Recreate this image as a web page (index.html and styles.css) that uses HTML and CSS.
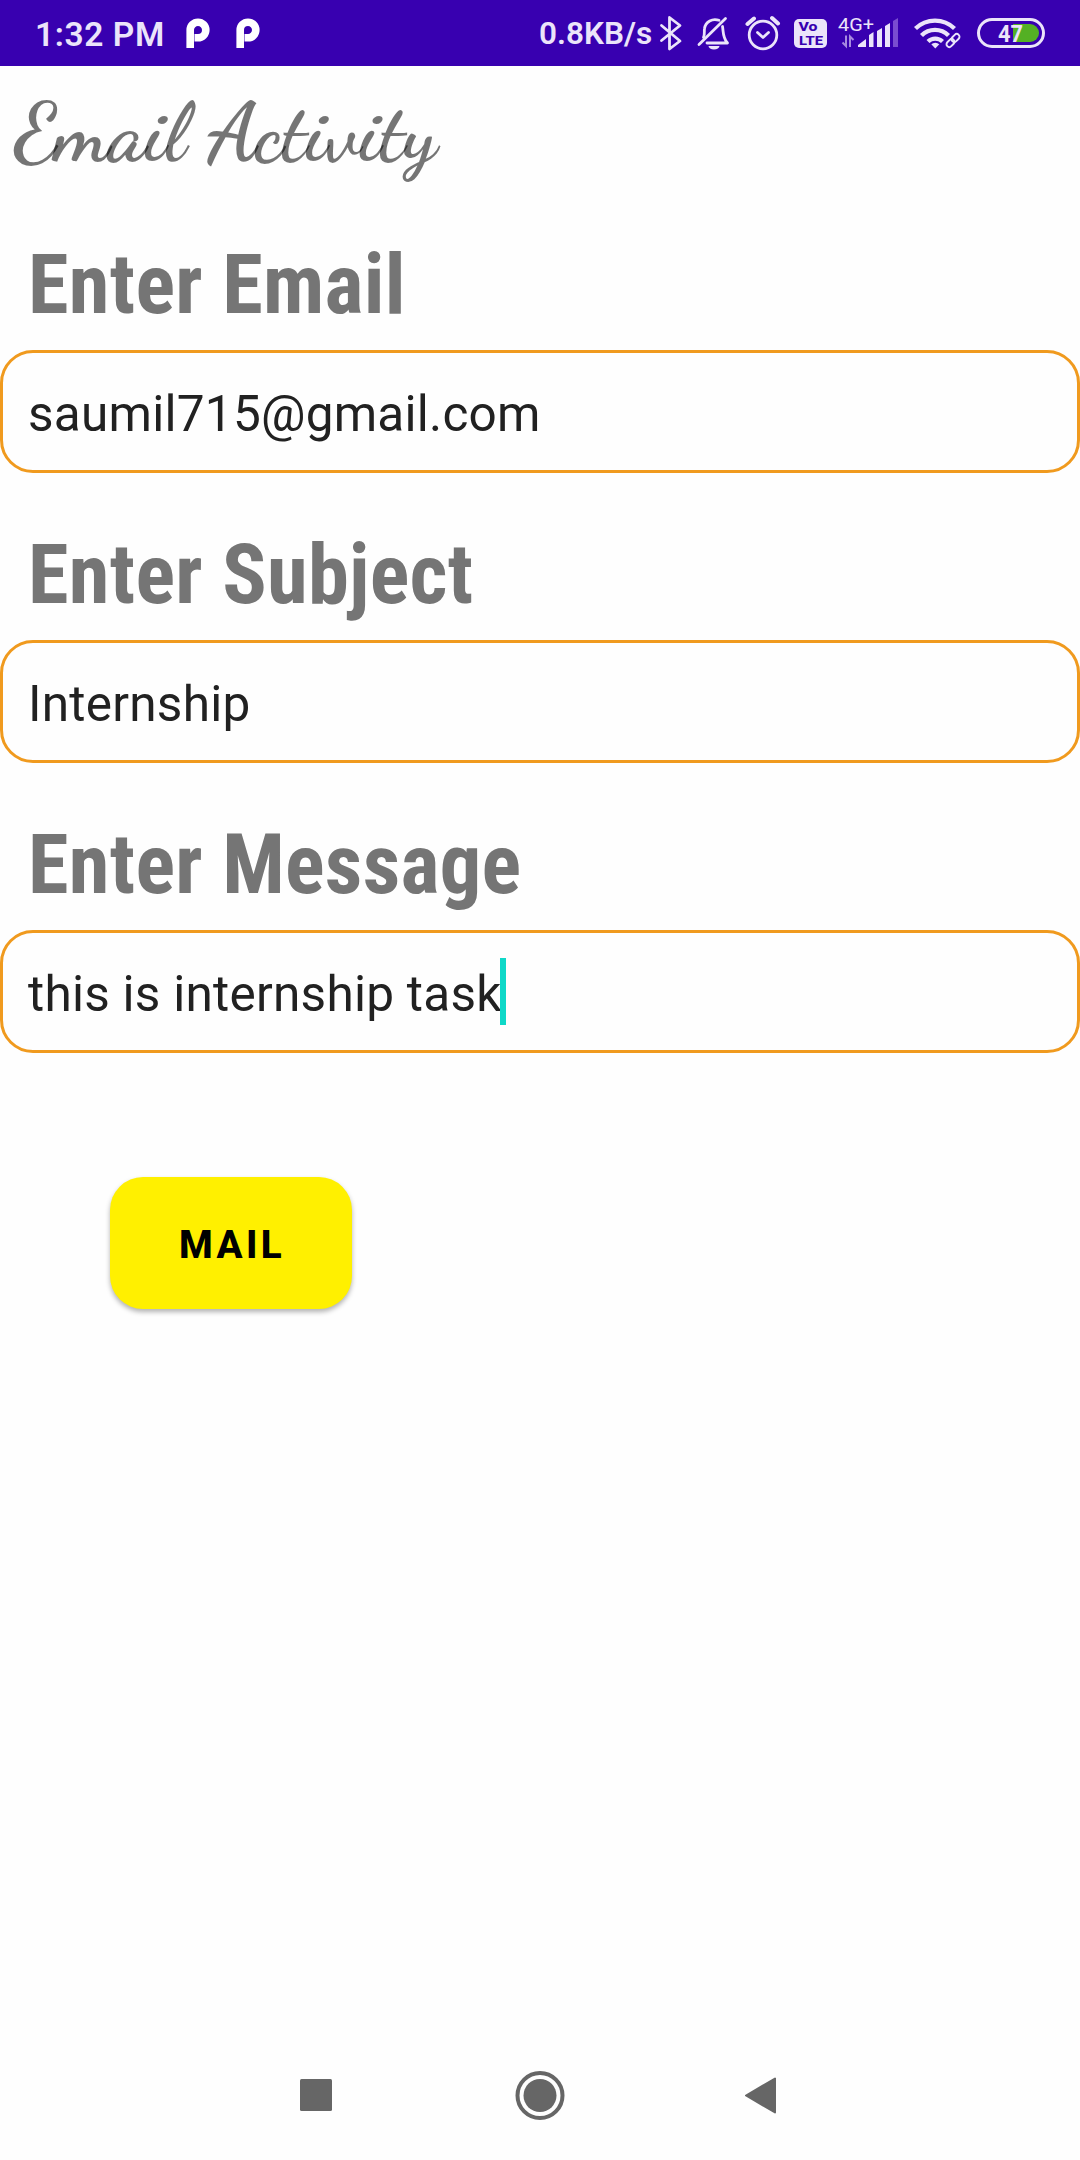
FILE: index.html
```html
<!DOCTYPE html>
<html lang="en">
<head>
<meta charset="utf-8">
<title>Email Activity</title>
<link rel="stylesheet" href="styles.css">
</head>
<body>
<div class="screen">
  <header class="status">
    <span class="clock">1:32 PM</span>
    <svg class="icons-left" width="76" height="66" viewBox="184 0 76 66">
      <g fill="none" stroke="#fff" stroke-width="7.6"><path d="M190.2 48V30a7.8 7.8 0 1 1 7.8 7.8h-3.5"/><path d="M240.2 48V30a7.8 7.8 0 1 1 7.8 7.8h-3.5"/></g>
    </svg>
    <span class="rate">0.8KB/s</span>
    <svg class="icons-right" width="400" height="66" viewBox="655 0 400 66">
      <g fill="none" stroke="#ebe4fa" stroke-width="2.8" stroke-linecap="round" stroke-linejoin="round">
        <path d="M661.5 25.5 680 41l-10.500 8V17.500L680 25.500 661.500 40.500"/>
        <path d="M699 44.500 725.500 18.500"/>
        <path d="M703.500 37.500c1.500-3 .5-6 1-9 1-7 8-10.500 14.500-8.200M722.500 26.500c1 5 0 11 5 16.500H707"/>
        <circle cx="763" cy="35" r="13.800"/>
        <path d="M757.500 32.500l5.500 5 5.500-5"/>
        <path stroke-width="4" d="M747.500 24l6.500-5.500M778 23.500l-6-5.500"/>
      </g>
      <path d="M708.500 46h11a5.500 3.500 0 0 1-11 0z" fill="#ebe4fa"/>
      <rect x="794" y="19" width="33" height="29" rx="5" fill="#ebe4fa"/>
      <text class="volte" x="798.500" y="31" textLength="19" lengthAdjust="spacingAndGlyphs">Vo</text>
      <text class="volte" x="799" y="44.700" textLength="24" lengthAdjust="spacingAndGlyphs">LTE</text>
      <text class="net" x="838" y="30.500" textLength="36" lengthAdjust="spacingAndGlyphs">4G+</text>
      <path d="M846 35.500V46l-3.500-3.500M850 47V36.500l3.500 3.500" fill="none" stroke="#a78ae0" stroke-width="2"/>
      <g fill="#ebe4fa"><path d="M858 47v-2l8-6v8zM869 35l4.500-3v15H869zM877 31l5-3v19h-5zM885 26l5-3v24h-5z"/></g>
      <path d="M893 21l5-3v29h-5z" fill="#7a4dd0"/>
      <g fill="none" stroke="#ebe4fa" stroke-width="4.300">
        <path d="M915.500 28.500a28 28 0 0 1 39 0M921.500 35.500a19 19 0 0 1 27 0M928 41.500a10.500 10.500 0 0 1 14.500 0"/>
      </g>
      <path d="M935.300 48.500l-4-4.300a6 6 0 0 1 8 0z" fill="#ebe4fa"/>
      <g fill="none" stroke="#3800b0" stroke-width="5"><rect x="-4.500" y="-2.800" width="9" height="5.600" rx="2.800" transform="translate(950.500 43) rotate(-45)"/><rect x="-4.500" y="-2.800" width="9" height="5.600" rx="2.800" transform="translate(955.500 38) rotate(-45)"/></g>
      <g fill="none" stroke="#ebe4fa" stroke-width="1.900"><rect x="-4.500" y="-2.800" width="9" height="5.600" rx="2.800" transform="translate(950.500 43) rotate(-45)"/><rect x="-4.500" y="-2.800" width="9" height="5.600" rx="2.800" transform="translate(955.500 38) rotate(-45)"/></g>
      <rect x="978.500" y="19.500" width="65" height="27" rx="13.500" fill="none" stroke="#ebe4fa" stroke-width="3"/>
      <path d="M1013 24h17a9 9 0 0 1 0 18h-17z" fill="#54b024"/>
      <text class="pct" x="998" y="42" textLength="25" lengthAdjust="spacingAndGlyphs">47</text>
    </svg>
  </header>
  <main class="content">
    <h1 class="title">Email Activity</h1>
    <section class="field"><label class="label">Enter Email</label><div class="box">saumil715@gmail.com</div></section>
    <section class="field"><label class="label">Enter Subject</label><div class="box">Internship</div></section>
    <section class="field"><label class="label">Enter Message</label><div class="box">this is internship task<i class="caret"></i></div></section>
    <button class="mail">MAIL</button>
  </main>
  <footer class="nav">
    <svg width="480" height="60" viewBox="300 2065 480 60" fill="#666">
      <rect x="300" y="2079" width="32" height="32" rx="1.500"/>
      <circle cx="540" cy="2095.500" r="22.500" fill="none" stroke="#666" stroke-width="4"/>
      <circle cx="540" cy="2095.500" r="16.500"/>
      <path d="M746 2095.500 775 2078.500V2112.500z" stroke="#666" stroke-width="2" stroke-linejoin="round"/>
    </svg>
  </footer>
</div>
</body>
</html>
```
FILE: styles.css
```css
* { box-sizing: border-box; }
body { margin: 0; background: #fefefe; font-family: Roboto, sans-serif; }
svg { display: block; flex: none; }
.screen { width: 1080px; height: 2160px; display: flex; flex-direction: column; }
.status { height: 66px; background: #3800b0; color: #ebe4fa; display: flex; align-items: center; font-weight: 600; white-space: nowrap; }
.clock { width: 149px; margin-left: 35px; padding-top: 2px; font-size: 33.5px; letter-spacing: 0.6px; }
.rate { margin-left: auto; width: 116px; padding-top: 1px; font-size: 31.5px; }
.icons-right { margin-right: 25px; }
.volte { font: 800 13px Roboto, sans-serif; fill: #3800b0; }
.net { font: 400 19px Roboto, sans-serif; fill: #ebe4fa; }
.pct { font: 700 24px Roboto, sans-serif; fill: #ebe4fa; }
.content { flex: 1; display: flex; flex-direction: column; }
.title { margin: 14px 0 0; padding-left: 14px; height: 110px; font: 700 82.5px/106px "Dancing Script", cursive; color: rgba(0, 0, 0, .54); white-space: nowrap; }
.field { height: 290px; padding-top: 44px; }
.label { display: block; height: 116px; line-height: 102px; padding-left: 28px; font-family: "Roboto Condensed", Roboto, sans-serif; font-stretch: 75%; font-weight: 700; font-size: 82.5px; letter-spacing: 0.33px; color: #757575; }
.box { height: 123px; border: 3px solid #f09a1e; border-radius: 33px; padding: 5px 0 0 25px; display: flex; align-items: center; font-size: 49.5px; letter-spacing: 0.25px; color: #212121; }
.caret { width: 6px; height: 67px; margin: -5px 0 0 -2px; background: #0fd8c8; }
.mail { width: 242px; height: 132px; margin: 117px 0 0 110px; padding: 3px 0 0 2px; border: 0; border-radius: 33px; background: #fff000; box-shadow: 0 3px 5px rgba(0,0,0,.3); font: 800 38.5px Roboto, sans-serif; letter-spacing: 3.4px; color: #000; }
.nav { height: 130px; display: flex; justify-content: center; align-items: center; }
```
